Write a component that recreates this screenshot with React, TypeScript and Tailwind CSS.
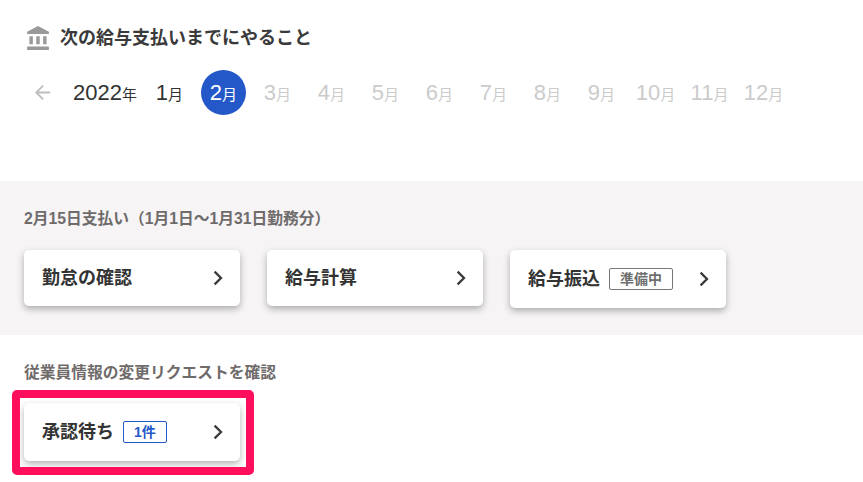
import React from "react";

const font = { fontFamily: '"Liberation Sans", "Noto Sans CJK JP", sans-serif' };

const months = [1, 2, 3, 4, 5, 6, 7, 8, 9, 10, 11, 12];

function Chevron() {
  return (
    <svg width="12" height="16" viewBox="0 0 12 16" fill="none" className="shrink-0">
      <path d="M2.6 1.6 9 8 2.6 14.4" stroke="#3b3b3b" strokeWidth="2.3" />
    </svg>
  );
}

function ActionCard({ label, tag, tagClass, tall }: { label: string; tag?: string; tagClass?: string; tall?: boolean }) {
  return (
    <div
      className={`flex w-[216px] items-center rounded-[5px] bg-white pl-[18px] pr-[16px] shadow-[0_3px_7px_rgba(0,0,0,0.3)] ${
        tall ? "h-[58px]" : "h-[56px]"
      }`}
    >
      <span className="text-[18px] font-bold text-[#333]">{label}</span>
      {tag && (
        <span
          className={`ml-[9px] flex h-[22px] items-center rounded-[2px] border px-[10px] text-[14px] font-bold ${tagClass}`}
        >
          {tag}
        </span>
      )}
      <span className="ml-auto">
        <Chevron />
      </span>
    </div>
  );
}

export default function App() {
  return (
    <div className="relative h-[482px] w-[863px] overflow-hidden bg-white" style={font}>
      {/* Header */}
      <div className="flex h-[70px] items-start pl-[26px] pt-[26px]">
        <svg width="24" height="24" viewBox="1.5 1 20 21" fill="#999">
          <path d="M4 10v7h3v-7H4zm6 0v7h3v-7h-3zM2 22h19v-3H2v3zm14-12v7h3v-7h-3zm-4.5-9L2 6v2h19V6l-9.5-5z" />
        </svg>
        <h1 className="ml-[10px] text-[18px] font-bold leading-[24px] text-[#3a3a3a]">
          次の給与支払いまでにやること
        </h1>
      </div>

      {/* Month selector */}
      <div className="flex h-[45px] items-center pl-[35px]">
        <svg viewBox="4 4 16 16" fill="#bdbdbd" className="h-[15px] w-[15px]">
          <path d="M20 11H7.83l5.59-5.59L12 4l-8 8 8 8 1.41-1.41L7.83 13H20v-2z" />
        </svg>
        <div className="ml-[23px] w-[74px] whitespace-nowrap text-[22px] text-[#333]">
          2022<span className="text-[15px]">年</span>
        </div>
        {months.map((m) => (
          <div
            key={m}
            className={`flex h-[45px] w-[45px] items-center justify-center whitespace-nowrap ${
              m === 12 ? "" : "mr-[9px]"
            } ${m === 2 ? "rounded-full bg-[#2458c8] text-white" : m === 1 ? "text-[#333]" : "text-[#cbcbcb]"}`}
          >
            <span className="text-[22px]">
              {m}
              <span className="text-[15px]">月</span>
            </span>
          </div>
        ))}
      </div>

      {/* Payroll tasks */}
      <section className="mt-[66px] h-[154px] bg-[#f6f4f5] pl-[24px] pt-[29px]">
        <h2 className="text-[15.75px] font-bold leading-[18px] text-[#6f6b6b]">
          2月15日支払い（1月1日〜1月31日勤務分）
        </h2>
        <div className="mt-[22px] flex items-start gap-[27px]">
          <ActionCard label="勤怠の確認" />
          <ActionCard label="給与計算" />
          <ActionCard label="給与振込" tag="準備中" tagClass="border-[#777] text-[#6f6f6f]" tall />
        </div>
      </section>

      {/* Change requests */}
      <section className="pl-[24px] pt-[29px]">
        <h2 className="text-[15.75px] font-bold leading-[18px] text-[#6f6b6b]">従業員情報の変更リクエストを確認</h2>
        <div className="mt-[21px]">
          <ActionCard label="承認待ち" tag="1件" tagClass="border-[#2458c8] text-[#2458c8]" tall />
        </div>
      </section>

      {/* Highlight annotation */}
      <div className="pointer-events-none absolute left-[12px] top-[390px] h-[85px] w-[242px] rounded-[5px] border-[8px] border-[#ff0f5b]" />
    </div>
  );
}
